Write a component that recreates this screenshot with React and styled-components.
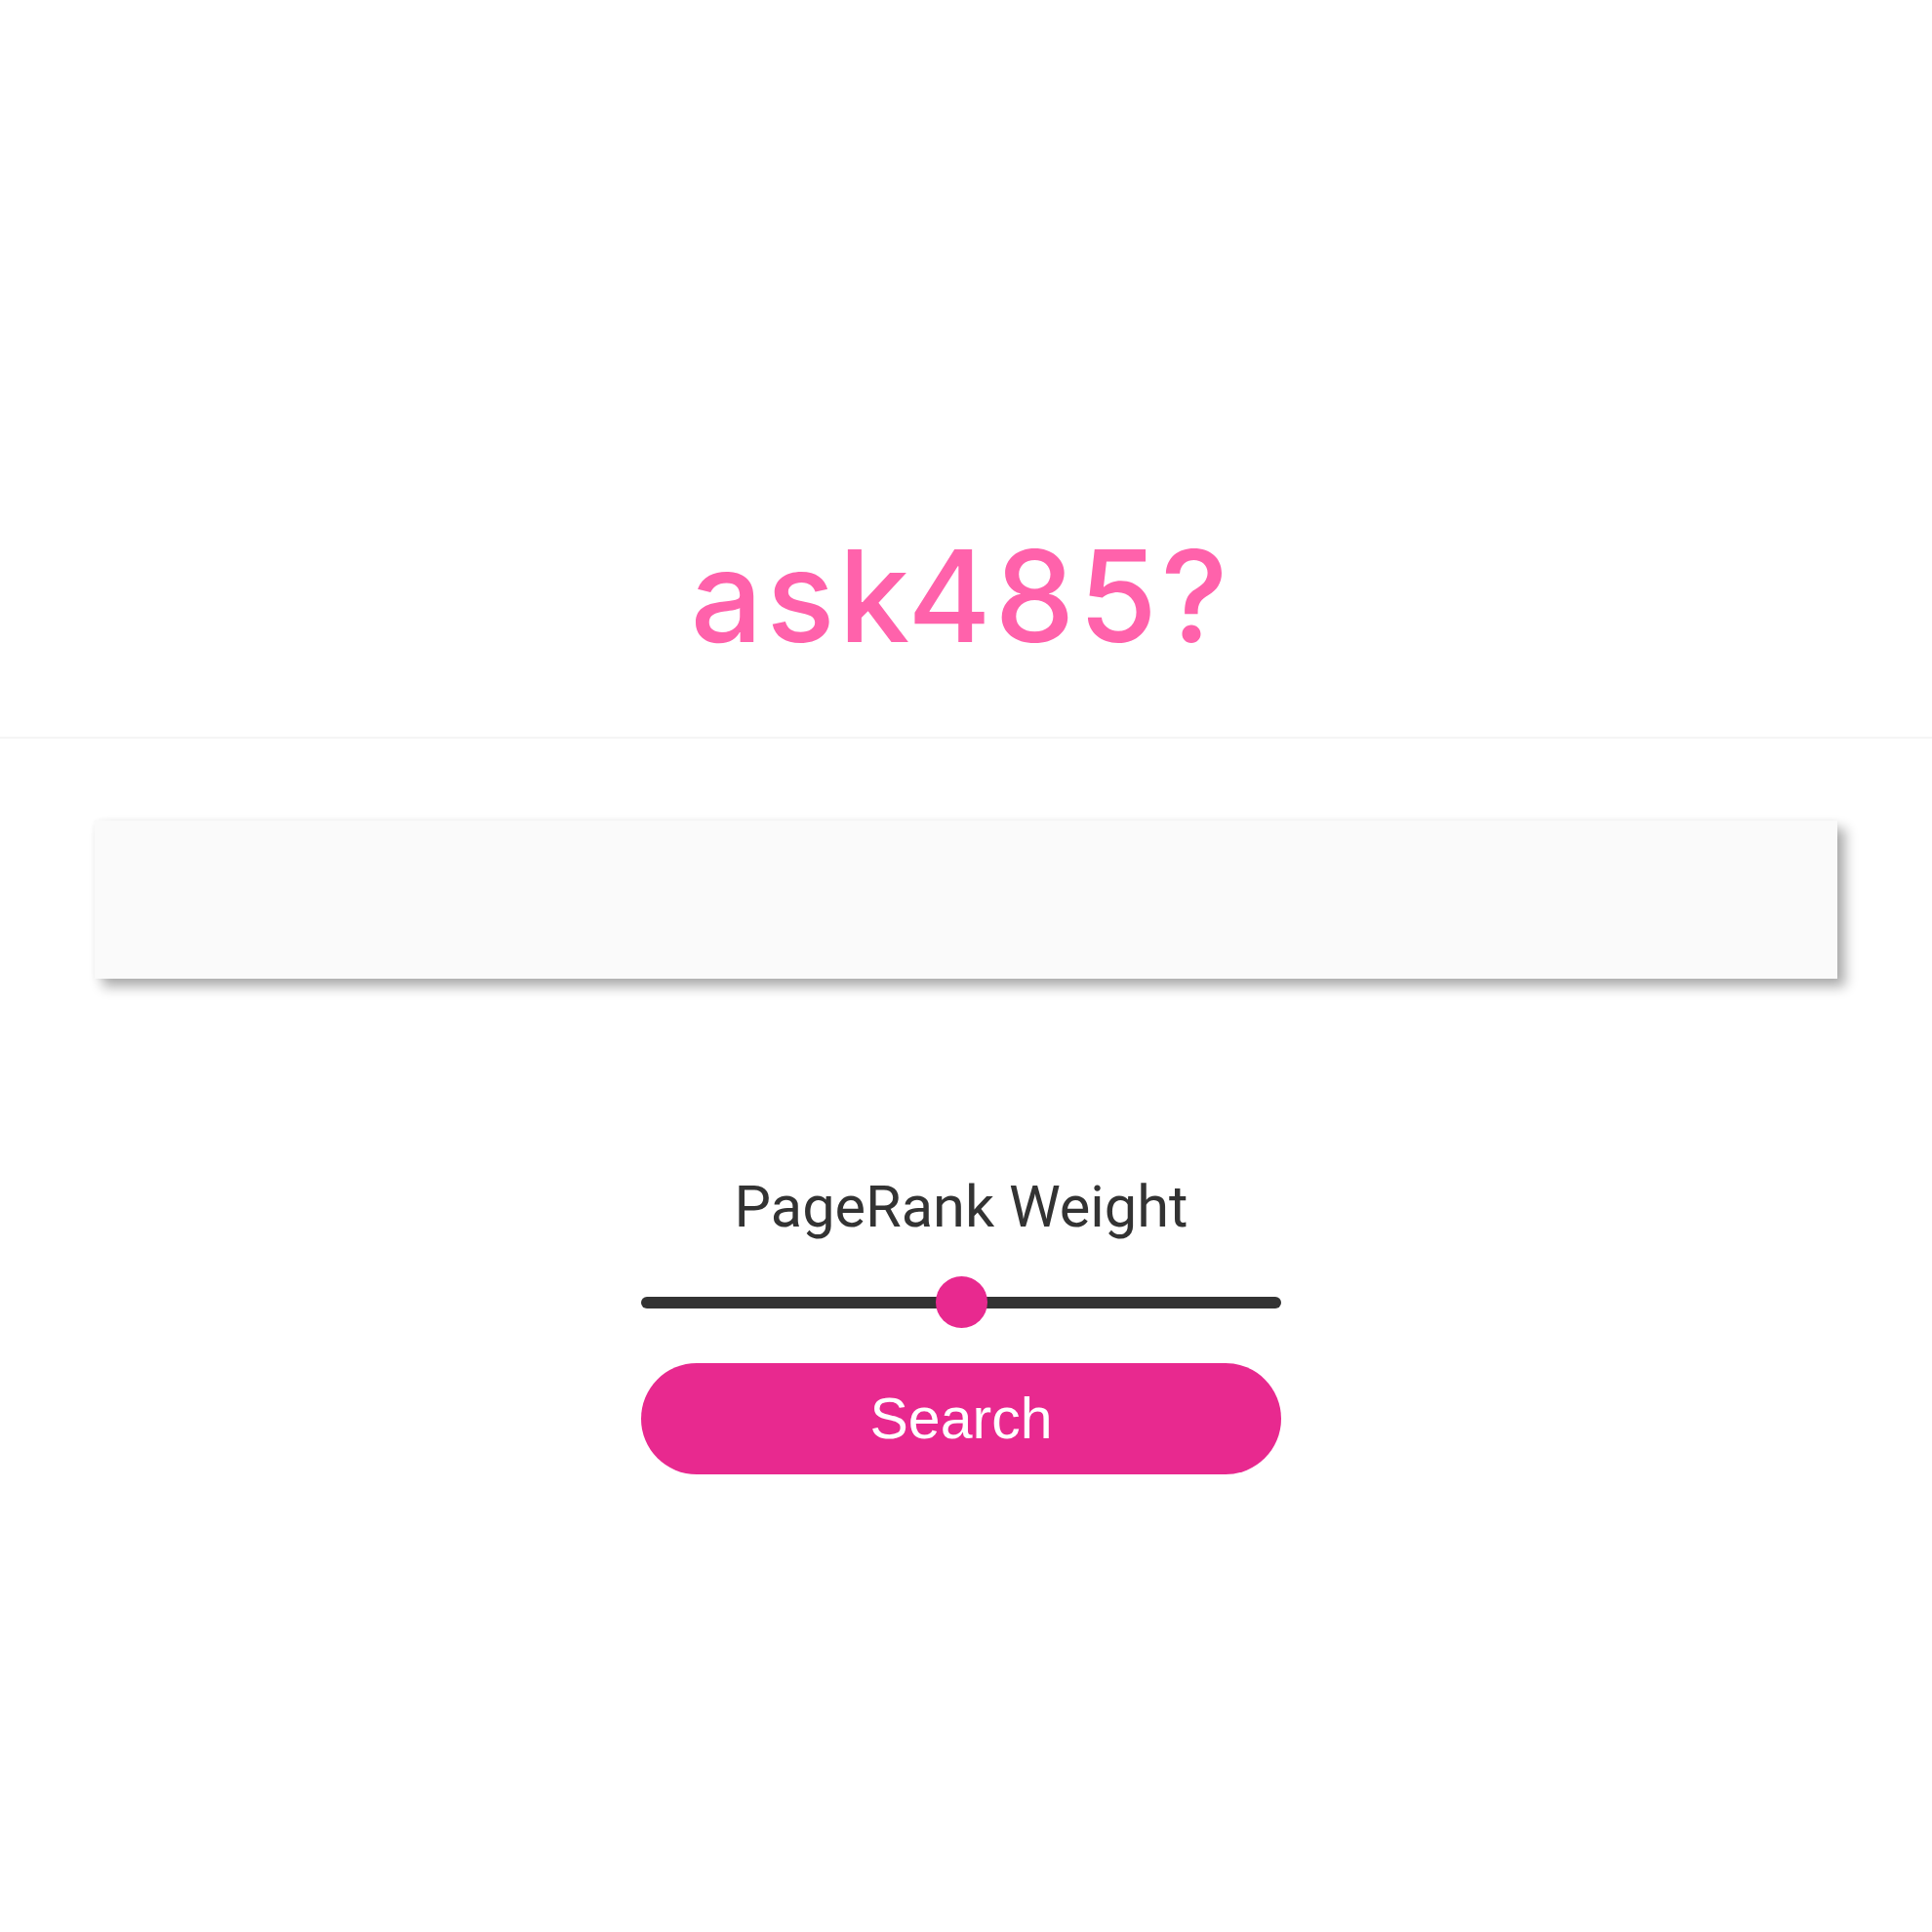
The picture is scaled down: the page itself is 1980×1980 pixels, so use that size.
import React, { useState } from 'react';
import styled, { createGlobalStyle } from 'styled-components';

const GlobalStyle = createGlobalStyle`
  body {
    margin: 0;
    background: #ffffff;
    font-family: Roboto, "Liberation Sans", sans-serif;
  }
`;

const Page = styled.div`
  width: 1980px;
  min-height: 1980px;
  background: #ffffff;
`;

const Header = styled.header`
  box-sizing: border-box;
  height: 757px;
  display: flex;
  justify-content: center;
  padding: 546px 10px 0 0;
  border-bottom: 2px solid #f5f5f5;
`;

const Logo = styled.h1`
  margin: 0;
  font-family: Inter, "Noto Sans", sans-serif;
  font-weight: 500;
  font-size: 130px;
  line-height: 1;
  letter-spacing: 4px;
  color: #ff62ab;
`;

const Main = styled.main`
  padding: 84px 97px 0;
  display: flex;
  flex-direction: column;
  align-items: center;
`;

const SearchBox = styled.input`
  box-sizing: border-box;
  width: 100%;
  height: 162px;
  border: none;
  outline: none;
  background: #fafafa;
  box-shadow: 8px 8px 12px rgba(0, 0, 0, 0.33), 0 0 6px rgba(0, 0, 0, 0.04);
  padding: 0 40px;
  font-family: "Liberation Sans", sans-serif;
  font-size: 48px;
  color: #333;
`;

const Controls = styled.div`
  width: 656px;
  margin: 199px 10px 0 0;
  display: flex;
  flex-direction: column;
  align-items: center;
`;

const Label = styled.div`
  font-family: Roboto, sans-serif;
  font-size: 59.5px;
  line-height: 70px;
  color: #333333;
`;

const Slider = styled.input`
  -webkit-appearance: none;
  appearance: none;
  width: 100%;
  height: 53px;
  margin: 36px 0 0;
  background: transparent;
  outline: none;

  &::-webkit-slider-runnable-track {
    height: 12px;
    border-radius: 6px;
    background: #333333;
  }

  &::-webkit-slider-thumb {
    -webkit-appearance: none;
    width: 53px;
    height: 53px;
    margin-top: -20.5px;
    border-radius: 50%;
    background: #e8298f;
    border: none;
  }
`;

const SearchButton = styled.button`
  width: 100%;
  height: 114px;
  margin-top: 36px;
  border: none;
  border-radius: 57px;
  background: #e8298f;
  color: #ffffff;
  font-family: "Liberation Sans", Arial, sans-serif;
  font-size: 59px;
  cursor: pointer;
`;

export default function App() {
  const [weight, setWeight] = useState(50);
  return (
    <Page>
      <GlobalStyle />
      <Header>
        <Logo>ask485?</Logo>
      </Header>
      <Main>
        <SearchBox type="text" />
        <Controls>
          <Label>PageRank Weight</Label>
          <Slider
            type="range"
            min="0"
            max="100"
            value={weight}
            onChange={e => setWeight(e.target.value)}
          />
          <SearchButton>Search</SearchButton>
        </Controls>
      </Main>
    </Page>
  );
}
